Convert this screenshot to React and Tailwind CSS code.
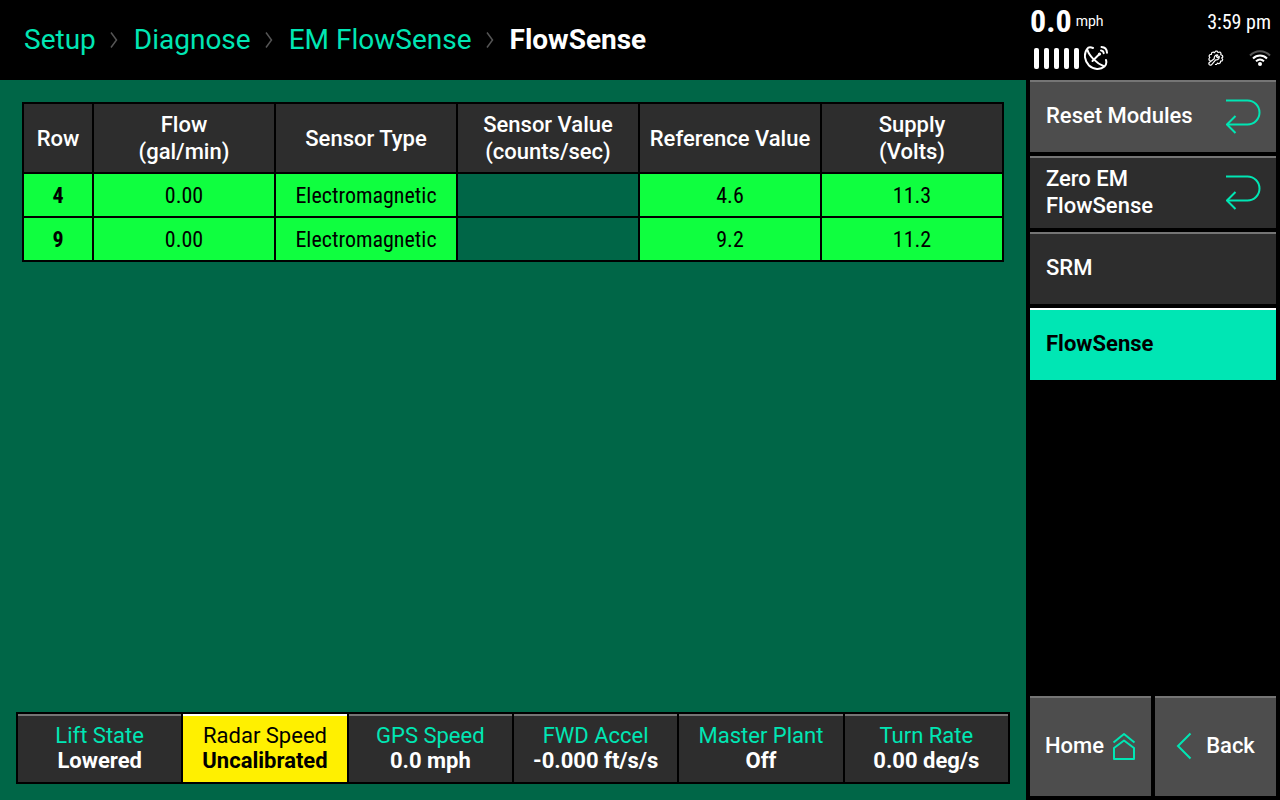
import { Fragment } from 'react';

const columns = [
  { label: 'Row', width: 'w-[70px]' },
  { label: 'Flow', unit: '(gal/min)' },
  { label: 'Sensor Type' },
  { label: 'Sensor Value', unit: '(counts/sec)' },
  { label: 'Reference Value' },
  { label: 'Supply', unit: '(Volts)' },
];

const rows = [
  { row: '4', cells: ['0.00', 'Electromagnetic', '', '4.6', '11.3'] },
  { row: '9', cells: ['0.00', 'Electromagnetic', '', '9.2', '11.2'] },
];

const metrics = [
  { label: 'Lift State', value: 'Lowered' },
  { label: 'Radar Speed', value: 'Uncalibrated', warning: true },
  { label: 'GPS Speed', value: '0.0 mph' },
  { label: 'FWD Accel', value: '-0.000 ft/s/s' },
  { label: 'Master Plant', value: 'Off' },
  { label: 'Turn Rate', value: '0.00 deg/s' },
];

const crumbs = ['Setup', 'Diagnose', 'EM FlowSense'];

function ReturnIcon() {
  return (
    <svg className="w-9 h-9 shrink-0 text-[#00e6b4]" viewBox="0 0 36 36" fill="none" stroke="currentColor" strokeWidth="2" aria-hidden="true">
      <path d="M0 2.500H21.500A12 12 0 0 1 21.500 26.500H1" />
      <path d="M9.500 18L1 26.500L9.500 35" />
    </svg>
  );
}

function HomeIcon() {
  return (
    <svg className="w-6 h-7 shrink-0 text-[#00e6b4]" viewBox="0 0 24 28" fill="none" stroke="currentColor" strokeWidth="2" strokeLinejoin="round" aria-hidden="true">
      <path d="M1.5 10.5L12 2L22.5 10.5" />
      <path d="M2 27V16L12 8.500L22 16V27Z" />
    </svg>
  );
}

function BackIcon() {
  return (
    <svg className="w-4 h-7 shrink-0 text-[#00e6b4]" viewBox="0 0 16 28" fill="none" stroke="currentColor" strokeWidth="2" aria-hidden="true">
      <path d="M14.5 1.5L2 14L14.5 26.5" />
    </svg>
  );
}

function SatelliteIcon() {
  return (
    <svg className="w-6 h-6" viewBox="0 0 24 24" fill="none" stroke="currentColor" strokeWidth="2" strokeLinecap="round" strokeLinejoin="round" aria-hidden="true">
      <path d="M9 2C6.500 1 4 1.500 3 3C-.5 8 .5 15 5 19.500C9.500 23.700 16.500 24 20.500 20.500C22.500 18.700 22.700 16.500 22 14" />
      <path d="M3.500 4C5 9.500 12.500 17.500 19.500 20" />
      <path d="M15 8.500L8.500 15" />
      <circle cx="15.500" cy="8" r="1.600" fill="currentColor" stroke="none" />
      <path d="M17 4.500C18.500 4.700 19.500 5.700 19.700 7.200M17.500 1C21 1.200 22.800 3.200 23 6.700" />
    </svg>
  );
}

function ServiceIcon() {
  return (
    <svg className="w-4 h-4" viewBox="0 0 16 16" fill="none" stroke="currentColor" strokeWidth="1.2" strokeLinejoin="round" aria-hidden="true">
      <path d="M2.500 10.800L1 10V8.500L1.800 7.500L1 6L2 4.500L3.400 4.300L3.700 2.700L5.300 2L6.500 2.700L7.700 1L9.200 1.200L10 2.500L11.800 2L13 3.200L12.800 4.700L14.500 5.500L14.800 7L13.700 8L14.700 9.500L14 11L12.600 11.200L12.300 12.800L10.800 13.700L9.500 13L8.500 14.500L7 14.500" />
      <path d="M1.300 14.700C.6 13.800 .8 13 1.600 12.300L6.300 8.700C5.900 6.300 7.500 4.700 9.800 5L8.400 6.700L9.400 7.700L11.200 6.300C11.500 8.700 9.900 10.200 7.700 9.900L3.900 14.300C3.100 15.300 2.100 15.500 1.300 14.700Z" />
    </svg>
  );
}

function WifiIcon() {
  return (
    <svg className="w-[22px] h-4" viewBox="0 0 22 16" fill="none" stroke="currentColor" strokeWidth="2" aria-hidden="true">
      <path className="text-[#555]" stroke="currentColor" d="M1 5.500C6.500 -.2 15.500 -.2 21 5.500" />
      <path d="M4 8.500C8 4.500 14 4.500 18 8.500" />
      <path d="M7 11.300C9.500 9 12.500 9 15 11.300" />
      <circle cx="11" cy="14" r="2" fill="currentColor" stroke="none" />
    </svg>
  );
}

function Breadcrumb() {
  return (
    <nav aria-label="Breadcrumb" className="flex h-20 items-center bg-black px-6 text-[28px]">
      {crumbs.map((crumb) => (
        <Fragment key={crumb}>
          <a href="#" className="text-[#00e6b4]">{crumb}</a>
          <svg className="mx-[14px] h-4 w-[10px]" viewBox="0 0 10 16" fill="none" stroke="#555" strokeWidth="1.5" aria-hidden="true">
            <path d="M1 .5L6.500 8L1 15.500" />
          </svg>
        </Fragment>
      ))}
      <span className="font-bold text-white" aria-current="page">FlowSense</span>
    </nav>
  );
}

function SensorTable() {
  return (
    <div className="mx-[6px] mt-[6px]">
      <table className="w-full table-fixed border-collapse text-center text-[22px] leading-[27px]">
        <thead>
          <tr className="h-[70px] bg-[#2d2d2d] text-white">
            {columns.map((column) => (
              <th key={column.label} scope="col" className={`border-2 border-black p-0 font-medium ${column.width || ''}`}>
                {column.label}
                {column.unit && <span className="block">{column.unit}</span>}
              </th>
            ))}
          </tr>
        </thead>
        <tbody className="font-['Roboto_Condensed',Roboto,sans-serif]">
          {rows.map(({ row, cells }) => (
            <tr key={row} className="h-11">
              <th scope="row" className="border-2 border-black bg-[#0fff3f] p-0 font-bold">{row}</th>
              {cells.map((cell, i) => (
                <td key={i} className={`border-2 border-black p-0 ${cell ? 'bg-[#0fff3f]' : ''}`}>{cell}</td>
              ))}
            </tr>
          ))}
        </tbody>
      </table>
    </div>
  );
}

function MetricBar() {
  return (
    <div className="mt-auto flex gap-[2px] bg-black p-[2px]">
      {metrics.map(({ label, value, warning }) => (
        <button
          key={label}
          type="button"
          className={`flex h-[68px] flex-1 flex-col items-center justify-center border-t-2 pb-[2px] text-[22px] leading-[25px] ${
            warning ? 'border-white bg-[#fff000] text-black' : 'border-[#757575] bg-[#2d2d2d] text-white'
          }`}
        >
          <span className={warning ? '' : 'text-[#00e6b4]'}>{label}</span>
          <span className="font-bold">{value}</span>
        </button>
      ))}
    </div>
  );
}

function StatusHeader() {
  return (
    <div className="flex h-20 flex-col text-white">
      <div className="flex h-[42px] items-center justify-between pr-[5px]">
        <div className="flex items-center gap-1">
          <span className="font-['Roboto_Condensed',Roboto,sans-serif] text-[32px] font-bold">0.0</span>
          <span className="text-sm">mph</span>
        </div>
        <span className="pt-[2px] font-['Roboto_Condensed',Roboto,sans-serif] text-xl">3:59 pm</span>
      </div>
      <div className="flex items-center justify-between pt-1 pl-1 pr-[5px]">
        <div className="flex items-center gap-[5px]">
          {[0, 1, 2, 3, 4].map((bar) => (
            <span key={bar} className="h-[21px] w-[5px] rounded-[2px] bg-white" />
          ))}
          <SatelliteIcon />
        </div>
        <div className="flex items-center gap-[25px]">
          <ServiceIcon />
          <WifiIcon />
        </div>
      </div>
    </div>
  );
}

function MenuButton({ label, tone = 'border-[#757575] bg-[#2d2d2d] text-white font-medium', icon }) {
  return (
    <button type="button" className={`flex h-[72px] w-full items-center justify-between border-t-2 pb-[3px] pl-4 pr-[14px] text-left ${tone}`}>
      <span>{label}</span>
      {icon && <ReturnIcon />}
    </button>
  );
}

function Sidebar() {
  return (
    <aside className="flex w-[254px] shrink-0 flex-col bg-black px-1 pb-1 text-[22px] leading-[27px]">
      <StatusHeader />
      <div className="flex flex-col gap-1">
        <MenuButton label="Reset Modules" icon tone="border-[#757575] bg-[#4d4d4d] text-white font-medium" />
        <MenuButton label={<>Zero EM<br />FlowSense</>} icon />
        <MenuButton label="SRM" />
        <MenuButton label="FlowSense" tone="border-white bg-[#00e6b4] text-black font-bold" />
      </div>
      <div className="mt-auto flex gap-1 font-medium text-white">
        <button type="button" className="flex h-[100px] flex-1 items-center justify-center gap-2 border-t-2 border-[#757575] bg-[#4d4d4d] pb-[3px]">
          Home
          <HomeIcon />
        </button>
        <button type="button" className="flex h-[100px] flex-1 items-center justify-center gap-[14px] border-t-2 border-[#757575] bg-[#4d4d4d] pb-[3px]">
          <BackIcon />
          Back
        </button>
      </div>
    </aside>
  );
}

export default function App() {
  return (
    <div className="flex min-h-screen bg-black font-[Roboto,sans-serif]">
      <div className="flex min-w-0 flex-1 flex-col">
        <Breadcrumb />
        <main className="flex flex-1 flex-col bg-[#006647] p-4 text-black">
          <SensorTable />
          <MetricBar />
        </main>
      </div>
      <Sidebar />
    </div>
  );
}
